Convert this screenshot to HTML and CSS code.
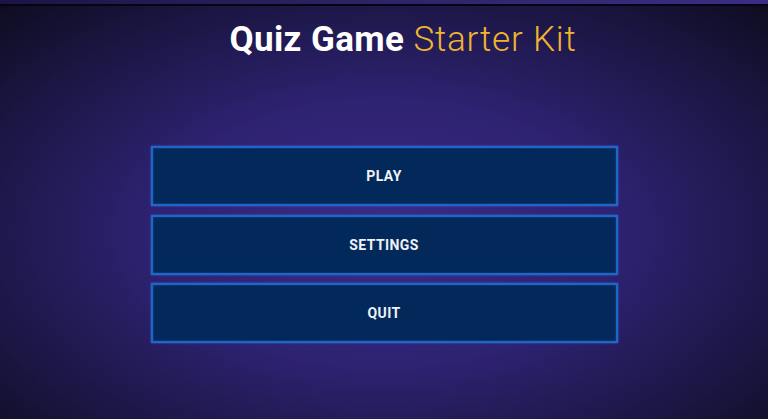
FILE: index.html
```html
<!DOCTYPE html>
<html>
<head>
	<meta charset="UTF-8">
	<title>Quiz Game Starter Kit</title>
	<link rel="stylesheet" href="styles.css">
</head>
<body>
	<div class="topbar"></div>
	<div class="screen">
		<h1 class="title"><b>Quiz Game</b> <span>Starter Kit</span></h1>
		<nav class="menu">
			<button class="btn">PLAY</button>
			<button class="btn">SETTINGS</button>
			<button class="btn">QUIT</button>
		</nav>
	</div>
</body>
</html>
```

FILE: styles.css
```css
html, body { margin: 0; height: 100%; }
body { background: #0d0b1c; font-family: Roboto, "Liberation Sans", sans-serif; overflow: hidden; }
.topbar { height: 4px; background: linear-gradient(to right, #1a1545, #2c2468 50%, #3b2c86); border-bottom: 2px solid #050410; }
.screen { height: calc(100% - 6px); background: radial-gradient(ellipse 75% 80% at 50% 55%, #3c2b86 0%, #2e2272 40%, #1a1540 75%, #0c0a1a 100%); display: flex; flex-direction: column; align-items: center; }
.title { margin: 14px 0 0 38px; font-size: 35px; line-height: 40px; font-weight: 400; color: #fff; letter-spacing: 0.4px; }
.title b { font-weight: 700; }
.title span { color: #f0b530; font-weight: 300; letter-spacing: 0.8px; }
.menu { margin-top: 86px; display: flex; flex-direction: column; gap: 8.5px; }
.btn { width: 467px; height: 60px; background: #03295a; border: 2px solid #2066c8; box-shadow: 0 0 2px #2a6ad0, inset 0 0 2px #1d55a8; color: #eef2f8; font-family: inherit; font-size: 14px; font-weight: 700; letter-spacing: 0.4px; padding: 0; }
```
